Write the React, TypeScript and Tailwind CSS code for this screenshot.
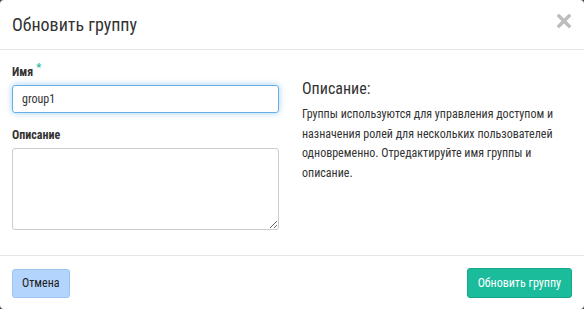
import React from "react";

export default function App() {
  return (
    <div className="w-[584px] h-[309px] bg-[#3a4444]">
      <div
        className="w-[584px] h-[309px] bg-white rounded-[4px] flex flex-col text-[#333] [font-stretch:condensed] font-['Roboto',sans-serif]"
      >
        <div className="h-[50px] flex items-center justify-between pl-3 pr-[13px] border-b border-[#e5e5e5]">
          <h4 className="text-[18px] leading-none text-[#333]">Обновить группу</h4>
          <svg width="14" height="14" viewBox="0 0 14 14" className="-mt-[8px]">
            <path d="M2 2 L12 12 M12 2 L2 12" stroke="#bdbdbd" strokeWidth="3.4" strokeLinecap="square" />
          </svg>
        </div>
        <div className="flex-1 flex px-3 pt-[14px]">
          <div className="w-[267px] flex flex-col">
            <label className="text-[12px] font-bold leading-[16px] flex">
              Имя<span className="text-[#1abc9c] text-[11px] ml-[3px] -mt-[4px]">*</span>
            </label>
            <div className="mt-[5px] h-[28px] border border-[#66afe9] rounded-[3px] shadow-[0_0_6px_rgba(102,175,233,0.6)] flex items-center px-[9px] text-[12px]">
              group1
            </div>
            <label className="mt-[14px] text-[12px] font-bold leading-[16px]">Описание</label>
            <textarea className="mt-[5px] h-[82px] border border-[#ccc] rounded-[3px] resize-y outline-none" />
          </div>
          <div className="ml-[23px] flex-1 pt-[15px]">
            <h3 className="text-[16px] leading-[20px]">Описание:</h3>
            <p className="mt-[6px] text-[12px] leading-[19.7px] pr-2">
              Группы используются для управления доступом и назначения ролей для нескольких пользователей одновременно. Отредактируйте имя группы и описание.
            </p>
          </div>
        </div>
        <div className="h-[54px] border-t border-[#e5e5e5] flex items-center justify-between px-3">
          <button className="h-[29px] px-[9px] bg-[#b3d4fc] border border-[#9cc3f3] rounded-[3px] text-[12px] text-[#222] mt-[1px]">
            Отмена
          </button>
          <button className="h-[30px] px-[10px] bg-[#1abc9c] border border-[#17a689] rounded-[3px] text-[12px] text-white">
            Обновить группу
          </button>
        </div>
      </div>
    </div>
  );
}
